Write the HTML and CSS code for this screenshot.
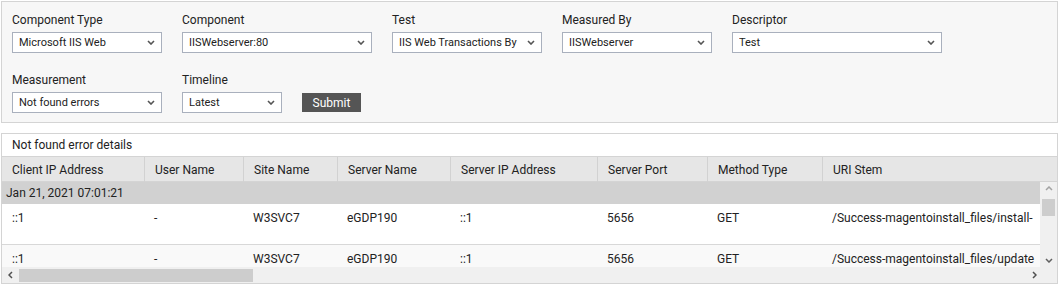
FILE: index.html
```html
<!DOCTYPE html>
<html lang="en">
<head>
    <meta charset="UTF-8">
    <title>Not found error details</title>
    <link rel="stylesheet" href="styles.css">
</head>
<body>
    <div class="filters">
        <div class="filter-row">
            <div class="field">
                <div class="field-label">Component Type</div>
                <div class="dropdown w150"><span>Microsoft IIS Web</span><svg class="chevron" viewBox="0 0 8 5"><polyline points="1,1 4,4 7,1"/></svg></div>
            </div>
            <div class="field">
                <div class="field-label">Component</div>
                <div class="dropdown w190"><span>IISWebserver:80</span><svg class="chevron" viewBox="0 0 8 5"><polyline points="1,1 4,4 7,1"/></svg></div>
            </div>
            <div class="field">
                <div class="field-label">Test</div>
                <div class="dropdown w150"><span>IIS Web Transactions By</span><svg class="chevron" viewBox="0 0 8 5"><polyline points="1,1 4,4 7,1"/></svg></div>
            </div>
            <div class="field">
                <div class="field-label">Measured By</div>
                <div class="dropdown w150"><span>IISWebserver</span><svg class="chevron" viewBox="0 0 8 5"><polyline points="1,1 4,4 7,1"/></svg></div>
            </div>
            <div class="field">
                <div class="field-label">Descriptor</div>
                <div class="dropdown w210"><span>Test</span><svg class="chevron" viewBox="0 0 8 5"><polyline points="1,1 4,4 7,1"/></svg></div>
            </div>
        </div>
        <div class="filter-row">
            <div class="field">
                <div class="field-label">Measurement</div>
                <div class="dropdown w150"><span>Not found errors</span><svg class="chevron" viewBox="0 0 8 5"><polyline points="1,1 4,4 7,1"/></svg></div>
            </div>
            <div class="field">
                <div class="field-label">Timeline</div>
                <div class="dropdown w100"><span>Latest</span><svg class="chevron" viewBox="0 0 8 5"><polyline points="1,1 4,4 7,1"/></svg></div>
            </div>
            <button class="submit-button">Submit</button>
        </div>
    </div>

    <div class="grid-panel">
        <div class="grid-title">Not found error details</div>
        <div class="grid-head">
            <div class="cell">Client IP Address</div>
            <div class="cell">User Name</div>
            <div class="cell">Site Name</div>
            <div class="cell">Server Name</div>
            <div class="cell">Server IP Address</div>
            <div class="cell">Server Port</div>
            <div class="cell">Method Type</div>
            <div class="cell">URI Stem</div>
        </div>
        <div class="grid-body">
            <div class="rows">
                <div class="group-row">Jan 21, 2021 07:01:21</div>
                <div class="data-row">
                    <div class="cell">::1</div>
                    <div class="cell">-</div>
                    <div class="cell">W3SVC7</div>
                    <div class="cell">eGDP190</div>
                    <div class="cell">::1</div>
                    <div class="cell">5656</div>
                    <div class="cell">GET</div>
                    <div class="cell">/Success-magentoinstall_files/install-</div>
                </div>
                <div class="data-row alt">
                    <div class="cell">::1</div>
                    <div class="cell">-</div>
                    <div class="cell">W3SVC7</div>
                    <div class="cell">eGDP190</div>
                    <div class="cell">::1</div>
                    <div class="cell">5656</div>
                    <div class="cell">GET</div>
                    <div class="cell">/Success-magentoinstall_files/update</div>
                </div>
            </div>
            <div class="vscroll">
                <svg class="arrow up" viewBox="0 0 8 5"><polyline points="1,4 4,1 7,4"/></svg>
                <div class="vthumb"></div>
                <div class="spacer"></div>
                <svg class="arrow down" viewBox="0 0 8 5"><polyline points="1,1 4,4 7,1"/></svg>
            </div>
        </div>
        <div class="hscroll">
            <svg class="harrow" viewBox="0 0 5 8"><polyline points="4,1 1,4 4,7"/></svg>
            <div class="hthumb"></div>
            <div class="spacer"></div>
            <svg class="harrow" viewBox="0 0 5 8"><polyline points="1,1 4,4 1,7"/></svg>
            <div class="corner"></div>
        </div>
    </div>
</body>
</html>
```

FILE: styles.css
```css
body {
    margin: 0;
    padding: 1px;
    font-family: Roboto, "Liberation Sans", Arial, sans-serif;
    color: #222;
    background: #fff;
}

.filters {
    width: 1057px;
    box-sizing: border-box;
    border: 1px solid #d4d4d4;
    background: #f7f7f7;
    padding: 10px 10px 9px;
    display: flex;
    flex-direction: column;
    gap: 19px;
}

.filter-row {
    display: flex;
    gap: 20px;
    align-items: flex-end;
}

.field-label {
    font-size: 12px;
    line-height: 15px;
    padding-top: 1px;
    margin-bottom: 4px;
}

.dropdown {
    height: 21px;
    box-sizing: border-box;
    border: 1px solid #a9b0bd;
    background: #fff;
    display: flex;
    align-items: center;
    padding: 0 6px 0 6px;
    font-size: 11px;
    overflow: hidden;
    white-space: nowrap;
}

.dropdown span {
    flex: 1;
    overflow: hidden;
}

.w100 { width: 100px; }
.w150 { width: 150px; }
.w190 { width: 190px; }
.w210 { width: 210px; }

.chevron {
    width: 8px;
    height: 5px;
    margin-left: 4px;
    flex: none;
    fill: none;
    stroke: #555;
    stroke-width: 1.6;
}

.submit-button {
    width: 59px;
    height: 19px;
    margin-bottom: 1px;
    border: none;
    background: #555;
    color: #fff;
    font-family: inherit;
    font-size: 12px;
    padding: 0;
    cursor: pointer;
}

.grid-panel {
    width: 1057px;
    box-sizing: border-box;
    margin-top: 10px;
    border: 1px solid #d4d4d4;
    font-size: 12px;
    overflow: hidden;
}

.grid-title {
    height: 22px;
    line-height: 22px;
    padding-left: 10px;
    border-bottom: 1px solid #d4d4d4;
}

.grid-head,
.data-row {
    display: grid;
    grid-template-columns: 142px 99px 94px 113px 147px 110px 115px 1fr;
    white-space: nowrap;
}

.grid-head {
    height: 24px;
    background: #e6e6e6;
    border-bottom: 1px solid #d4d4d4;
}

.grid-head .cell {
    line-height: 24px;
    padding: 1px 0 0 10px;
    border-left: 1px solid #d2d2d2;
}

.grid-head .cell:first-child {
    border-left: none;
}

.grid-body {
    display: flex;
    height: 85px;
}

.rows {
    flex: 1;
    overflow: hidden;
}

.group-row {
    height: 22px;
    line-height: 22px;
    background: #d1d1d1;
    padding-left: 4px;
}

.data-row {
    height: 40px;
    background: #fff;
    border-bottom: 1px solid #d8d8d8;
}

.data-row.alt {
    background: #f9f9f9;
}

.data-row .cell {
    padding: 7px 0 0 10px;
    line-height: 15px;
    overflow: hidden;
}

.vscroll {
    width: 17px;
    flex: none;
    background: #f0f0f0;
    display: flex;
    flex-direction: column;
    align-items: center;
}

.arrow {
    width: 8px;
    height: 5px;
    fill: none;
    stroke-width: 1.5;
}

.arrow.up {
    margin-top: 4px;
    stroke: #a3a3a3;
}

.arrow.down {
    margin-bottom: 4px;
    stroke: #606060;
}

.vthumb {
    width: 13px;
    height: 17px;
    margin-top: 8px;
    background: #cdcdcd;
}

.spacer {
    flex: 1;
}

.hscroll {
    height: 16px;
    background: #f0f0f0;
    display: flex;
    align-items: center;
}

.harrow {
    width: 5px;
    height: 8px;
    margin: 0 6px;
    flex: none;
    fill: none;
    stroke: #505050;
    stroke-width: 1.5;
}

.hthumb {
    width: 234px;
    height: 13px;
    background: #cdcdcd;
}

.corner {
    width: 17px;
    height: 16px;
    margin-left: -3px;
    background: #f0f0f0;
}
```
